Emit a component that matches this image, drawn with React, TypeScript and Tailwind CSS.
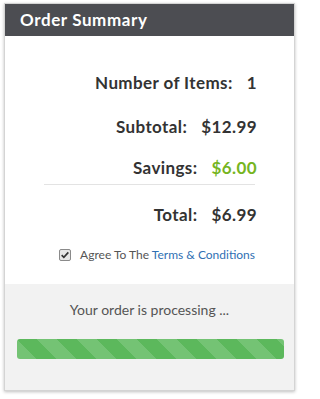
import React from 'react';

const rows = [
  { label: 'Number of Items:', value: '1', green: false },
  { label: 'Subtotal:', value: '$12.99', green: false },
  { label: 'Savings:', value: '$6.00', green: true },
];

function Row({ label, value, green }: { label: string; value: string; green?: boolean }) {
  return (
    <div className="flex justify-end gap-[14px] -mr-[2px] text-[17px] leading-[20px] font-bold tracking-[0.4px] text-[#333]">
      <span>{label}</span>
      <span className={green ? 'text-[#76b51f]' : ''}>{value}</span>
    </div>
  );
}

export default function App() {
  return (
    <div className="pt-[3px] pl-[4px] bg-white h-[399px]" style={{ fontFamily: 'Lato, "Open Sans", sans-serif' }}>
      <div className="w-[291px] border border-[#d4d4d4] shadow-[0_1px_3px_rgba(0,0,0,0.25)]">
        {/* header */}
        <div className="h-8 bg-[#4c4d52] pl-[15px] flex items-center">
          <h2 className="text-white text-[17px] font-bold tracking-[0.6px]">Order Summary</h2>
        </div>

        {/* totals */}
        <div className="bg-white px-[39px] pt-[37px] pb-[21px]">
          <Row {...rows[0]} />
          <div className="mt-6">
            <Row {...rows[1]} />
          </div>
          <div className="mt-[21px]">
            <Row {...rows[2]} />
          </div>
          <div className="mt-[6px] h-px bg-[#e3e3e3]" />
          <div className="mt-5">
            <Row label="Total:" value="$6.99" />
          </div>
          <label className="mt-[22px] flex items-center justify-end gap-[9px] text-[12px] leading-4 text-[#555]">
            <span className="w-3 h-3 border border-[#8a8a8a] rounded-[2px] bg-[#e6e6e6] flex items-center justify-center">
              <svg viewBox="0 0 12 12" className="w-[10px] h-[10px]">
                <path d="M2 6.2 L4.6 8.8 L10 2.8" fill="none" stroke="#333" strokeWidth="2" />
              </svg>
            </span>
            <span>
              Agree To The <a className="text-[#2f6fb3]">Terms &amp; Conditions</a>
            </span>
          </label>
        </div>

        {/* processing */}
        <div className="bg-[#f2f2f2] pt-4 pb-[31px]">
          <p className="text-center text-[14px] leading-5 text-[#555]">Your order is processing ...</p>
          <div className="mt-[19px] ml-3 w-[267px] h-5 rounded-[3px] bg-[#5cb85c] bg-[repeating-linear-gradient(45deg,#74c374_0px,#74c374_14.14px,transparent_14.14px,transparent_28.28px)]" />
        </div>
      </div>
    </div>
  );
}
